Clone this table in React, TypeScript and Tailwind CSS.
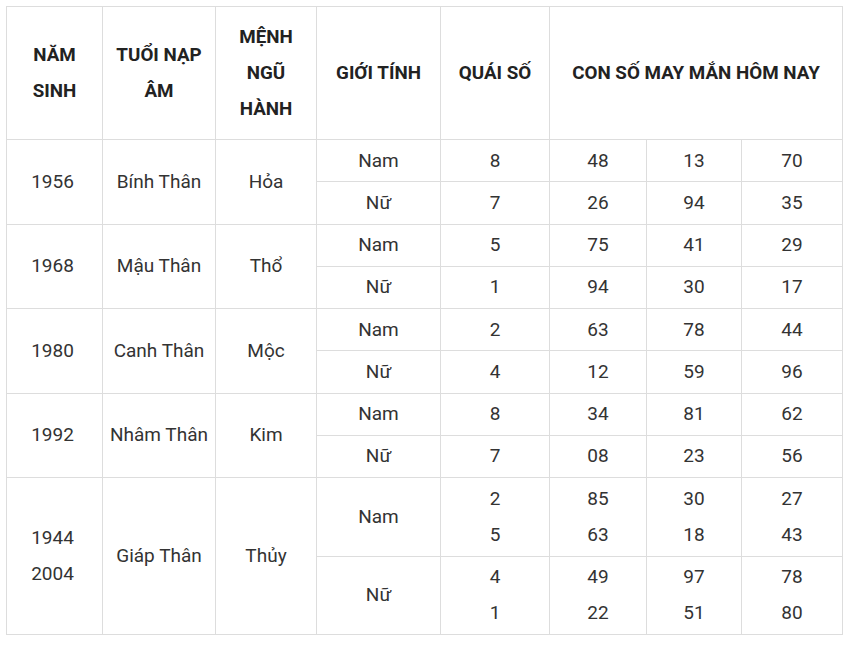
// App.tsx — lucky numbers table for people born in Thân years.
type Sub = { gender: string; quai: string[]; nums: string[][] };
type Group = { years: string[]; napAm: string; menh: string; subs: Sub[]; tall?: boolean };

const GROUPS: Group[] = [
  {
    years: ["1956"],
    napAm: "Bính Thân",
    menh: "Hỏa",
    subs: [
      { gender: "Nam", quai: ["8"], nums: [["48"], ["13"], ["70"]] },
      { gender: "Nữ", quai: ["7"], nums: [["26"], ["94"], ["35"]] },
    ],
  },
  {
    years: ["1968"],
    napAm: "Mậu Thân",
    menh: "Thổ",
    subs: [
      { gender: "Nam", quai: ["5"], nums: [["75"], ["41"], ["29"]] },
      { gender: "Nữ", quai: ["1"], nums: [["94"], ["30"], ["17"]] },
    ],
  },
  {
    years: ["1980"],
    napAm: "Canh Thân",
    menh: "Mộc",
    subs: [
      { gender: "Nam", quai: ["2"], nums: [["63"], ["78"], ["44"]] },
      { gender: "Nữ", quai: ["4"], nums: [["12"], ["59"], ["96"]] },
    ],
  },
  {
    years: ["1992"],
    napAm: "Nhâm Thân",
    menh: "Kim",
    subs: [
      { gender: "Nam", quai: ["8"], nums: [["34"], ["81"], ["62"]] },
      { gender: "Nữ", quai: ["7"], nums: [["08"], ["23"], ["56"]] },
    ],
  },
  {
    years: ["1944", "2004"],
    napAm: "Giáp Thân",
    menh: "Thủy",
    tall: true,
    subs: [
      { gender: "Nam", quai: ["2", "5"], nums: [["85", "63"], ["30", "18"], ["27", "43"]] },
      { gender: "Nữ", quai: ["4", "1"], nums: [["49", "22"], ["97", "51"], ["78", "80"]] },
    ],
  },
];

const td = "border border-[#dddddd] p-0 text-center align-middle";

function Lines({ items }: { items: string[] }) {
  return (
    <>
      {items.map((t) => (
        <div key={t}>{t}</div>
      ))}
    </>
  );
}

export default function App() {
  return (
    <div className="min-h-screen bg-white pl-[6px] pt-[6px]">
      <table
        className="table-fixed border-collapse text-[19px] leading-[36px] text-[#333333]"
        style={{ fontFamily: "Roboto, 'Noto Sans', sans-serif", width: 836 }}
      >
        <colgroup>
          <col className="w-[96px]" />
          <col className="w-[113px]" />
          <col className="w-[101px]" />
          <col className="w-[124px]" />
          <col className="w-[109px]" />
          <col className="w-[97px]" />
          <col className="w-[95px]" />
          <col className="w-[101px]" />
        </colgroup>
        <thead>
          <tr className="h-[133px] text-[18.8px] font-bold text-[#222222]">
            <th className={td}>
              NĂM
              <br />
              SINH
            </th>
            <th className={td}>
              TUỔI NẠP
              <br />
              ÂM
            </th>
            <th className={td}>
              MỆNH
              <br />
              NGŨ
              <br />
              HÀNH
            </th>
            <th className={td}>GIỚI TÍNH</th>
            <th className={td}>QUÁI SỐ</th>
            <th className={td} colSpan={3}>
              CON SỐ MAY MẮN HÔM NAY
            </th>
          </tr>
        </thead>
        <tbody>
          {GROUPS.map((g) =>
            g.subs.map((s, i) => (
              <tr key={g.napAm + s.gender} className={g.tall ? "h-[78.5px]" : "h-[42.25px]"}>
                {i === 0 && (
                  <>
                    <td className={`${td} pr-[4px]`} rowSpan={2}>
                      <Lines items={g.years} />
                    </td>
                    <td className={td} rowSpan={2}>
                      {g.napAm}
                    </td>
                    <td className={td} rowSpan={2}>
                      {g.menh}
                    </td>
                  </>
                )}
                <td className={td}>{s.gender}</td>
                <td className={td}>
                  <Lines items={s.quai} />
                </td>
                {s.nums.map((n, k) => (
                  <td key={k} className={td}>
                    <Lines items={n} />
                  </td>
                ))}
              </tr>
            ))
          )}
        </tbody>
      </table>
    </div>
  );
}
